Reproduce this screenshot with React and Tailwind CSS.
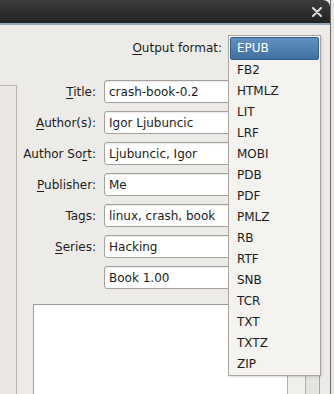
import React from "react";

const formats = ["EPUB", "FB2", "HTMLZ", "LIT", "LRF", "MOBI", "PDB", "PDF", "PMLZ", "RB", "RTF", "SNB", "TCR", "TXT", "TXTZ", "ZIP"];

// label parts: [before, mnemonic, after]
const fields = [
  [["", "T", "itle:"], "crash-book-0.2"],
  [["", "A", "uthor(s):"], "Igor Ljubuncic"],
  [["Author So", "r", "t:"], "Ljubuncic, Igor"],
  [["", "P", "ublisher:"], "Me"],
  [["Ta", "g", "s:"], "linux, crash, book"],
  [["", "S", "eries:"], "Hacking"],
  [null, "Book 1.00"],
];

export default function App() {
  return (
    <div
      className="w-[334px] h-[394px] overflow-hidden bg-[#e9e7e3] text-[12px] text-[#1c1c1c]"
      style={{ fontFamily: '"DejaVu Sans", sans-serif' }}
    >
      <div className="relative w-[331px] h-[394px] flex flex-col border-r border-[#6d6b68]">
        {/* title bar */}
        <div className="h-[25px] shrink-0 rounded-tr-[7px] bg-gradient-to-b from-[#3c3c3c] to-[#222222] border-b-2 border-[#8ea6c0] flex items-center justify-end pr-[8px]">
          <svg width="10" height="10" viewBox="0 0 10 10">
            <path d="M1 1 L9 9 M9 1 L1 9" stroke="#d6d6d6" strokeWidth="2.2" strokeLinecap="round" />
          </svg>
        </div>

        {/* body */}
        <div className="flex-1 flex flex-col bg-[#edebe7]">
          <div className="mt-[12px] h-[21px] flex items-center justify-end gap-[6px] pr-[10px]">
            <span>
              <u className="underline-offset-2">O</u>utput format:
            </span>
            <div className="w-[92px] h-[21px]" />
          </div>

          <div className="mt-[22px] flex flex-1">
            <div className="w-[17px] mt-[5px] border-t border-r border-[#b9b6b1] bg-[#ebe8e4]" />
            <div className="flex-1 flex flex-col">
              <div className="grid grid-cols-[79px_1fr] gap-x-[8px] gap-y-[8px]">
                {fields.map(([label, value], i) => (
                  <React.Fragment key={i}>
                    <div className="h-[23px] flex items-center justify-end">
                      {label && (
                        <span>
                          {label[0]}
                          <u className="underline-offset-2">{label[1]}</u>
                          {label[2]}
                        </span>
                      )}
                    </div>
                    <div className="h-[23px] mr-[20px] flex items-center pl-[4px] bg-white border border-[#a4a19c] rounded-[3px] shadow-[inset_0_1px_1px_rgba(0,0,0,0.08)]">
                      {value}
                    </div>
                  </React.Fragment>
                ))}
              </div>

              <div className="mt-[15px] flex flex-1 pl-[16px]">
                <div className="w-[254px] bg-white border-t border-l border-[#9d9a95]" />
                <div className="w-[19px] bg-[#f1efec] border-l border-r border-[#b3b0ab]" />
                <div className="w-[14px] bg-[#e6e4e0] border-r border-[#a8a5a0]" />
              </div>
            </div>
          </div>
        </div>

        {/* open dropdown */}
        <div className="absolute left-[228px] top-[35px] w-[93px] h-[341px] flex flex-col bg-[#f5f3f0] border border-[#a9a6a1] pt-[1px] pb-[1px] px-[1px] shadow-[1px_1px_2px_rgba(0,0,0,0.15)]">
          {formats.map((f, i) => (
            <div
              key={f}
              className={
                i === 0
                  ? "flex-1 flex items-center pl-[6px] rounded-[2px] text-white bg-gradient-to-b from-[#6390bf] to-[#41709f] border border-[#34608e]"
                  : "flex-1 flex items-center pl-[7px]"
              }
            >
              {f}
            </div>
          ))}
        </div>
      </div>
    </div>
  );
}
